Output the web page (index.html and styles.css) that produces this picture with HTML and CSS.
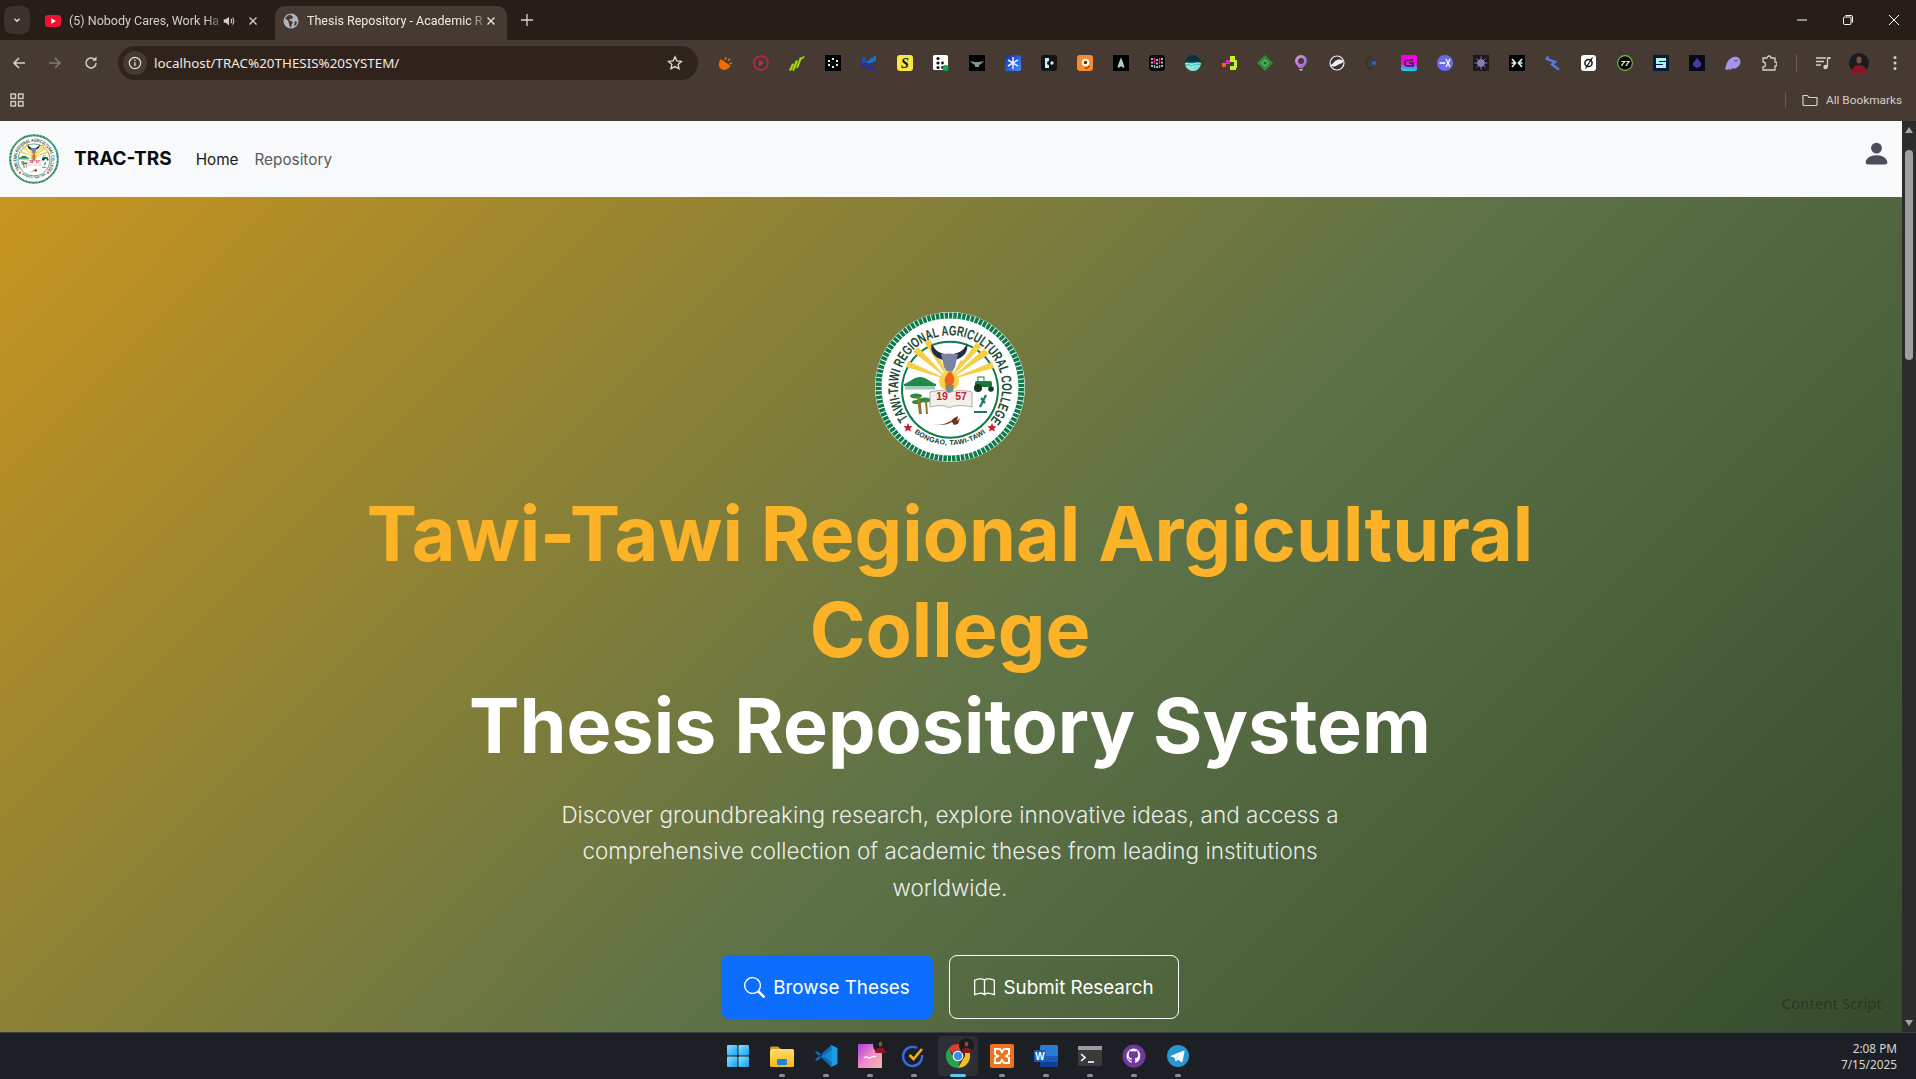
FILE: index.html
```html
<!DOCTYPE html>
<html lang="en">
<head>
<meta charset="utf-8">
<title>Thesis Repository - Academic Research</title>
<link rel="stylesheet" href="styles.css">
</head>
<body>
<svg class="defs" aria-hidden="true">
  <defs>
    <linearGradient id="gBlue" x1="0" y1="0" x2="1" y2="1"><stop offset="0" stop-color="#0d2fb0"/><stop offset="1" stop-color="#3f8cff"/></linearGradient>
    <linearGradient id="gMag" x1="0" y1="0" x2="0" y2="1"><stop offset="0" stop-color="#f700e6"/><stop offset=".5" stop-color="#f700e6"/><stop offset="1" stop-color="#00e5ee"/></linearGradient>
    <linearGradient id="gTeal" x1="0" y1="0" x2="0" y2="1"><stop offset="0" stop-color="#082a38"/><stop offset=".45" stop-color="#0d3a46"/><stop offset=".5" stop-color="#39c5b8"/><stop offset="1" stop-color="#9cf0e4"/></linearGradient>
    <linearGradient id="gBalloon" x1="0" y1="0" x2="1" y2="1"><stop offset="0" stop-color="#e59adf"/><stop offset="1" stop-color="#8a5fd0"/></linearGradient>
    <linearGradient id="gPic" x1="0" y1="0" x2="1" y2="1"><stop offset="0" stop-color="#a93fd8"/><stop offset=".5" stop-color="#f08acb"/><stop offset="1" stop-color="#f3b9a6"/></linearGradient>
    <linearGradient id="gWin" x1="0" y1="0" x2="1" y2="1"><stop offset="0" stop-color="#7fe6ff"/><stop offset="1" stop-color="#1b9cf0"/></linearGradient>
    <linearGradient id="gFolder" x1="0" y1="0" x2="0" y2="1"><stop offset="0" stop-color="#ffdc6a"/><stop offset="1" stop-color="#f5b81f"/></linearGradient>
    <path id="arcTop" d="M33.200 106.300A52 52 0 1 1 116.800 106.300"/>
    <path id="arcBot" d="M32 114A58 58 0 0 0 118 114"/>
    <symbol id="seal" viewBox="0 0 150 150">
      <circle cx="75" cy="75" r="75" fill="#fff"/>
      <circle cx="75" cy="75" r="71.500" fill="#fff" stroke="#0f7a4b" stroke-width="6"/>
      <circle cx="75" cy="75" r="71.500" fill="none" stroke="#fff" stroke-width="6" stroke-dasharray="1 3.400"/>
      <path d="M31.500 98A48 48 0 1 1 118.500 98A48 48 0 0 1 31.500 98z" fill="#fff" stroke="#0f7a4b" stroke-width="2"/>
      <text class="seal-top"><textPath href="#arcTop" startOffset="0" textLength="232" lengthAdjust="spacingAndGlyphs">TAWI-TAWI REGIONAL AGRICULTURAL COLLEGE</textPath></text>
      <text class="seal-bot"><textPath href="#arcBot" startOffset="50%" text-anchor="middle">BONGAO, TAWI-TAWI</textPath></text>
      <path d="M33 111l1.300 3 3.300.3-2.500 2.100.8 3.200-2.900-1.700-2.900 1.700.8-3.200-2.500-2.100 3.300-.3z M117 111l1.300 3 3.300.3-2.500 2.100.8 3.200-2.900-1.700-2.900 1.700.8-3.200-2.500-2.100 3.300-.3z" fill="#c8202e"/>
      <path fill="#f5cf45" d="M74 68L31 55l2-6z M74 68L38 40l5-5z M74 68L49 30l6-3z M74 68L62 50l4-2z M74 68L86 48l4 2z M74 68L101 31l6 3z M74 68L109 37l5 5z M74 68L117 50l2 6z"/>
      <path d="M57 31c-3 9 3 15 11 17l6 2 6-2c8-2 14-8 12-17-2 7-8 10-14 11-3-.5-6-.5-8 0-6-1-11-4-13-11z" fill="#1f2f45"/>
      <path d="M66 42h17l-3 13-4 7h-3l-4-7z" fill="#7a83a0"/>
      <circle cx="74" cy="69" r="10" fill="#f7d24a"/>
      <path d="M75 59c4 4 6 9 2 14h-6c-3-5-1-9 4-14z" fill="#e8641e"/>
      <path d="M70 73h9l-3 17h-3z" fill="#7c8a86"/>
      <path d="M29 72c6-2 10-7 16-7s10 5 16 7v2H29z" fill="#1f8a4c"/>
      <path d="M30 74h30v3.500H30z" fill="#9ccdb6"/>
      <g fill="#2f8a3a"><ellipse cx="41" cy="84" rx="6" ry="2.400"/><ellipse cx="50" cy="88" rx="6" ry="2.400"/><ellipse cx="42" cy="90" rx="5" ry="2"/></g>
      <path d="M42 85l2 17h3l-2-17z M50 89l1 13h2l-1-13z" fill="#8a7a30"/>
      <path d="M55 80c8-2 15-2 19 1 4-3 14-3 23-1v15c-9-2-19-2-23 1-4-3-11-3-19-1z" fill="#f3f0ea" stroke="#8d8d8d" stroke-width=".7"/>
      <text class="seal-yr" x="67" y="88" text-anchor="middle">19</text>
      <text class="seal-yr" x="86" y="88" text-anchor="middle">57</text>
      <g fill="#1a7a3c"><rect x="100" y="69" width="17" height="6" rx="2"/><circle cx="103" cy="76" r="4" fill="#103a22"/><circle cx="116" cy="77" r="2.800" fill="#103a22"/><rect x="103" y="65" width="6" height="5" fill="none" stroke="#1a7a3c"/></g>
      <path d="M111 83l-6 12m1-9l4 5m-11 9h13" stroke="#1a7a5a" stroke-width="2.200" fill="none"/>
      <path d="M58 112c7 2 12 0 18-3l3-3 4-2-1 5 3-3-2 6-4 1-2-3c-5 3-12 4-19 2z" fill="#6d3418"/>
    </symbol>
  </defs>
</svg>

<div class="window">
  <header class="tabstrip">
    <button class="tab-search" aria-label="Search tabs"><svg viewBox="0 0 12 12" class="i10"><path d="M3 4.500L6 7.500 9 4.500" fill="none" stroke="#e8e0da" stroke-width="1.600"/></svg></button>
    <div class="tab">
      <svg viewBox="0 0 16 12" class="fav-yt"><rect width="16" height="12" rx="3" fill="#f01030"/><path d="M6.300 3.200L11 6 6.300 8.800z" fill="#fff"/></svg>
      <span class="tab-title">(5) Nobody Cares, Work Ha</span>
      <svg viewBox="0 0 16 16" class="i14 tab-sound"><path d="M2 6v4h2.500L8 13V3L4.500 6z" fill="#d6cdc7"/><path d="M10 5.500c1.200 1.300 1.200 3.700 0 5M12 4c2 2.200 2 5.800 0 8" fill="none" stroke="#d6cdc7" stroke-width="1.200"/></svg>
      <svg viewBox="0 0 10 10" class="i10 tab-x"><path d="M1.500 1.500l7 7m0-7l-7 7" stroke="#d6cdc7" stroke-width="1.300"/></svg>
    </div>
    <div class="tab tab-active">
      <svg viewBox="0 0 16 16" class="i16"><circle cx="8" cy="8" r="7.500" fill="#aeb4bb"/><path d="M6 1.500c-1 2-3 2-4 4l3 2 1 3 1 4c2 0 1-3 3-5-1-2-3-1-4-3 1-1 3 0 4-2 0-1-1-2-4-3zM12 8l2 1-1 3-2 1z" fill="#463a33"/></svg>
      <span class="tab-title">Thesis Repository - Academic R</span>
      <svg viewBox="0 0 10 10" class="i10 tab-x"><path d="M1.500 1.500l7 7m0-7l-7 7" stroke="#efe9e5" stroke-width="1.300"/></svg>
    </div>
    <svg viewBox="0 0 12 12" class="i12 tab-new"><path d="M6 0v12M0 6h12" stroke="#ddd5cf" stroke-width="1.300"/></svg>
    <div class="winctl">
      <svg viewBox="0 0 12 12" class="i12"><path d="M1 6h10" stroke="#fff" stroke-width="1"/></svg>
      <svg viewBox="0 0 12 12" class="i12"><rect x="1.500" y="3" width="7.500" height="7.500" rx="1.200" fill="none" stroke="#fff"/><path d="M3.500 1.500h5.500a1.500 1.500 0 0 1 1.500 1.500v5.500" fill="none" stroke="#fff"/></svg>
      <svg viewBox="0 0 12 12" class="i12"><path d="M1 1l10 10M11 1L1 11" stroke="#fff" stroke-width="1"/></svg>
    </div>
  </header>

  <div class="toolbar">
    <div class="navbtns">
      <svg viewBox="0 0 16 16" class="i16"><path d="M14 8H3M8 3L3 8l5 5" fill="none" stroke="#d9d0ca" stroke-width="1.600"/></svg>
      <svg viewBox="0 0 16 16" class="i16"><path d="M2 8h11M8 3l5 5-5 5" fill="none" stroke="#85796f" stroke-width="1.600"/></svg>
      <svg viewBox="0 0 16 16" class="i16"><path d="M13 8a5 5 0 1 1-1.500-3.600" fill="none" stroke="#d9d0ca" stroke-width="1.500"/><path d="M13.500 1.500v4.200H9.300z" fill="#d9d0ca"/></svg>
    </div>
    <div class="omnibox">
      <span class="site-info"><svg viewBox="0 0 16 16" class="i14"><circle cx="8" cy="8" r="6.500" fill="none" stroke="#e8e0da" stroke-width="1.300"/><path d="M8 7v4.500M8 4.300v1.400" stroke="#e8e0da" stroke-width="1.400"/></svg></span>
      <span class="url">localhost/TRAC%20THESIS%20SYSTEM/</span>
      <svg viewBox="0 0 16 16" class="i16 star"><path d="M8 1.800l1.900 4.100 4.500.5-3.300 3 .9 4.400L8 11.600l-4 2.200.9-4.400-3.300-3 4.500-.5z" fill="none" stroke="#e8e0da" stroke-width="1.300"/></svg>
    </div>
    <div class="exts">
      <span class="ext"><svg viewBox="0 0 16 16"><g transform="rotate(35 7 10)"><path d="M1 7h12c0 5-3 8-6 8s-6-3-6-8z" fill="#f66a00"/></g><path d="M8 5l1-3M11 6l2-2.500M12.500 9l2.500-1" stroke="#f66a00" stroke-width="1.500"/></svg></span>
      <span class="ext"><svg viewBox="0 0 16 16"><circle cx="8" cy="8" r="7" fill="none" stroke="#c4244f" stroke-width="1.500"/><path d="M6 4.500L11.500 8 6 11.500z" fill="#c4244f"/></svg></span>
      <span class="ext"><svg viewBox="0 0 16 16"><path d="M0 15.500l3-7 2 .5-3 7zM3 15l4-10 2 1-4 10zM7 13l4-11 2 1-4 10zM11 4l3.500-3 1.500 1-4 3z" fill="#a2d80f"/></svg></span>
      <span class="ext"><svg viewBox="0 0 16 16"><rect width="16" height="16" fill="#000"/><g fill="#e8e8e8"><rect x="7" y="3" width="2" height="2"/><rect x="3" y="5" width="2" height="2"/><rect x="11" y="5" width="2" height="2"/><rect x="3" y="9" width="2" height="2"/><rect x="11" y="9" width="2" height="2"/><rect x="7" y="11" width="2" height="2"/></g></svg></span>
      <span class="ext"><svg viewBox="0 0 16 16"><path d="M1 2h4v6H1z" fill="#1750b5"/><path d="M5 7l10-7v6L8 8.500z" fill="#0d74d8"/><path d="M5 8.500l9 3V16L1 12V8.500z" fill="#2b2f8a"/></svg></span>
      <span class="ext"><svg viewBox="0 0 16 16"><rect width="16" height="16" rx="3" fill="#fde543"/><text class="ext-s" x="8" y="13" text-anchor="middle">S</text></svg></span>
      <span class="ext"><svg viewBox="0 0 16 16"><rect width="15" height="15" rx="1.500" fill="#fff"/><g fill="#111"><circle cx="5" cy="3.500" r="1.600"/><circle cx="5" cy="8" r="1.600"/><circle cx="9.500" cy="8" r="1.400"/><circle cx="5" cy="12.500" r="1.600"/><circle cx="9.500" cy="12.500" r="1.400"/></g><circle cx="12.500" cy="13" r="3" fill="#14a84f"/></svg></span>
      <span class="ext"><svg viewBox="0 0 16 16"><rect width="16" height="16" fill="#000"/><path d="M1 6l5 1h4l5-1-3 3-2 1v2H6v-2L4 9z" fill="#8f8f8f"/></svg></span>
      <span class="ext"><svg viewBox="0 0 16 16"><rect width="16" height="16" rx="2" fill="url(#gBlue)"/><path d="M8 2v12M3 5l10 6M13 5L3 11" stroke="#e6f0ff" stroke-width="1.500"/></svg></span>
      <span class="ext"><svg viewBox="0 0 16 16"><rect width="16" height="16" rx="3" fill="#101416"/><path d="M4 3h4v3a2 2 0 0 0 0 4v3H4z" fill="#cfeafc"/><circle cx="11" cy="8" r="1.700" fill="#cfeafc"/></svg></span>
      <span class="ext"><svg viewBox="0 0 16 16"><rect width="16" height="16" rx="3" fill="#f98a2f"/><circle cx="8.500" cy="7.500" r="3.800" fill="#fff"/><circle cx="8.500" cy="7.500" r="1.700" fill="#5a2a00"/><path d="M8 13c2 .5 3.500 0 4-2" fill="none" stroke="#5a2a00"/></svg></span>
      <span class="ext"><svg viewBox="0 0 16 16"><rect width="16" height="16" fill="#000"/><path d="M8 2.500l2 5 1.500 5H9.500L8 11l-1.500 1.500H4.500L6 7.500z" fill="#c8c8c8"/></svg></span>
      <span class="ext"><svg viewBox="0 0 16 16"><rect width="16" height="16" rx="3" fill="#0a0a0a"/><path d="M3 3v10M8 4v9M13 3v10" stroke="#e8e8e8" stroke-width="1.500" stroke-dasharray="2 1.500"/><path d="M5.500 3v6M10.500 3v6" stroke="#ee1f9a" stroke-width="1.500"/><path d="M5.500 10v3M10.500 10v3" stroke="#2fd8d0" stroke-width="1.500"/></svg></span>
      <span class="ext"><svg viewBox="0 0 16 16"><circle cx="8" cy="8" r="8" fill="url(#gTeal)"/><path d="M0 9c3-2 5 1 8 0s5-2 8 0M1 12c3-1 5 1 7 0s5-2 7 0" fill="none" stroke="#d9fbf5" stroke-width=".8"/></svg></span>
      <span class="ext"><svg viewBox="0 0 16 16"><rect x="9" y="1" width="5" height="6" fill="#c9ee2c"/><rect x="9" y="11" width="6" height="4" fill="#c9ee2c"/><rect x="13" y="5" width="3" height="8" fill="#c9ee2c"/><rect x="5" y="5" width="4" height="4" fill="#f01cd0"/><rect x="1" y="8" width="4" height="4" fill="#f0602a"/></svg></span>
      <span class="ext"><svg viewBox="0 0 16 16"><path d="M8 0l8 8-8 8-8-8z" fill="#2f8a3c"/><path d="M8 4l4 4-4 4-4-4z" fill="#5db85c"/><circle cx="8" cy="8" r="1.600" fill="#1c5a26"/></svg></span>
      <span class="ext"><svg viewBox="0 0 16 16"><path d="M8 0a6 6 0 0 1 6 6c0 3-3 5-4 7H6c-1-2-4-4-4-7a6 6 0 0 1 6-6z" fill="url(#gBalloon)"/><circle cx="8" cy="6" r="3" fill="#463a33"/><path d="M6 14h4v1H6zM7 15.300h2V16H7z" fill="#b9aab5"/></svg></span>
      <span class="ext"><svg viewBox="0 0 16 16"><circle cx="8" cy="8" r="7" fill="#3d322c" stroke="#f2f2f2" stroke-width="1.200"/><path d="M1.500 10c3-1 3.500-4 6.500-5s5 0 6.500 1c-1 3-3 2-6 4s-5 2-7 0z" fill="#f2f2f2"/></svg></span>
      <span class="ext"><svg viewBox="0 0 16 16"><path d="M8 1.500a6.500 6.500 0 0 0-2 12.700" fill="none" stroke="#333" stroke-width="2"/><circle cx="9" cy="8" r="2" fill="#1c6cf0"/></svg></span>
      <span class="ext"><svg viewBox="0 0 16 16"><rect width="16" height="16" rx="2" fill="url(#gMag)"/><path d="M12 5H5.500L4 6.500v3L5.500 11H12V8H8" fill="none" stroke="#2a2a35" stroke-width="1.600"/></svg></span>
      <span class="ext"><svg viewBox="0 0 16 16"><circle cx="8" cy="8" r="8" fill="#6a6cf0"/><path d="M2.500 8h6M9 4l4 8M13 4l-4 8" stroke="#fff" stroke-width="1.300" fill="none"/></svg></span>
      <span class="ext"><svg viewBox="0 0 16 16"><rect width="16" height="16" fill="#191a22"/><circle cx="8" cy="8" r="3.800" fill="#8a7fae"/><path d="M8 1.500v13M1.500 8h13M3.500 3.500l9 9M12.500 3.500l-9 9" stroke="#8a7fae"/></svg></span>
      <span class="ext"><svg viewBox="0 0 16 16"><rect width="16" height="16" fill="#000"/><path d="M3 4l3.500 4L3 12M13 4L9.500 8 13 12M2.500 8h4M9.500 8h4" fill="none" stroke="#eee" stroke-width="1.600"/></svg></span>
      <span class="ext"><svg viewBox="0 0 16 16"><path d="M3 1.500L2 4l8 3-3 2.500 7 5" fill="none" stroke="#4d7df0" stroke-width="2.400"/></svg></span>
      <span class="ext"><svg viewBox="0 0 16 16"><rect width="15" height="16" rx="3" fill="#fff"/><circle cx="7.500" cy="8" r="3.600" fill="none" stroke="#111" stroke-width="1.500"/><path d="M11.500 2.500l-7 11" stroke="#111" stroke-width="1.300"/></svg></span>
      <span class="ext"><svg viewBox="0 0 16 16"><circle cx="8" cy="8" r="7.400" fill="#060606" stroke="#76c442" stroke-width="1.100"/><text class="ext-77" x="8" y="11" text-anchor="middle">77</text></svg></span>
      <span class="ext"><svg viewBox="0 0 16 16"><rect width="16" height="16" fill="#0a1a3c"/><path d="M3 3h10v3H6v1h7v6H3v-3h7V9H3z" fill="#a8f3ee"/></svg></span>
      <span class="ext"><svg viewBox="0 0 16 16"><rect width="16" height="16" fill="#0a0a14"/><path d="M8 3l4 5v3l-4 2-4-2V8z" fill="#5035a8"/></svg></span>
      <span class="ext"><svg viewBox="0 0 16 16"><path d="M0 14c1-2 1-5 3-8s6-5 9-4 4 4 3 7-4 4-6 5l-1-1-3 2-1-1-2 1z" fill="#a693ea"/><path d="M10 5v1.500M12 5v1.500" stroke="#463a33"/></svg></span>
      <span class="ext"><svg viewBox="0 0 16 16"><path d="M2 3h4a2 2 0 0 1 4 0h4v4a2 2 0 0 1 0 4v4H2v-3a2 2 0 0 0 0-5z" fill="none" stroke="#d8cfc8" stroke-width="1.300"/></svg></span>
    </div>
    <span class="tool-sep"></span>
    <span class="tool-btn"><svg viewBox="0 0 16 16" class="i16"><path d="M1 3h10M1 6.500h8M1 10h5" stroke="#d8cfc8" stroke-width="1.500"/><path d="M12.500 3v9" stroke="#d8cfc8" stroke-width="1.300"/><path d="M12.500 2h3v2h-3z" fill="#d8cfc8"/><circle cx="10.500" cy="12" r="2.200" fill="#d8cfc8"/></svg></span>
    <span class="tool-btn"><svg viewBox="0 0 20 20" class="avatar"><circle cx="10" cy="10" r="10" fill="#1b1b1f"/><path d="M2 20c1-6 4-8 8-8s7 2 8 8z" fill="#8a1524"/><ellipse cx="10" cy="7" rx="2.600" ry="3.600" fill="#7a5240"/></svg></span>
    <span class="tool-btn"><svg viewBox="0 0 4 16" class="dots"><g fill="#d8cfc8"><circle cx="2" cy="2.500" r="1.500"/><circle cx="2" cy="8" r="1.500"/><circle cx="2" cy="13.500" r="1.500"/></g></svg></span>
  </div>

  <div class="bookmarks">
    <svg viewBox="0 0 14 14" class="i14 apps"><g fill="none" stroke="#d8cfc8" stroke-width="1.400"><rect x="1" y="1" width="4.500" height="4.500"/><rect x="8.500" y="1" width="4.500" height="4.500"/><rect x="1" y="8.500" width="4.500" height="4.500"/><rect x="8.500" y="8.500" width="4.500" height="4.500"/></g></svg>
    <span class="bm-sep"></span>
    <svg viewBox="0 0 16 14" class="i16 bm-folder"><path d="M1 11.500V2.500h4.500l1.500 2h8v7a1 1 0 0 1-1 1H2a1 1 0 0 1-1-1z" fill="none" stroke="#d8cfc8" stroke-width="1.200"/></svg>
    <span class="bm-text">All Bookmarks</span>
  </div>

  <div class="viewport">
    <div class="page">
      <nav class="navbar">
        <svg class="brand-logo" role="img" aria-label="TRAC seal"><use href="#seal"/></svg>
        <span class="brand-name">TRAC-TRS</span>
        <a class="nav-link nav-current">Home</a>
        <a class="nav-link">Repository</a>
        <svg viewBox="0 0 16 16" class="nav-user"><path d="M3 14s-1 0-1-1 1-4 6-4 6 3 6 4-1 1-1 1H3zm5-6a3 3 0 1 0 0-6 3 3 0 0 0 0 6z" fill="#495057"/></svg>
      </nav>
      <section class="hero">
        <svg class="hero-logo" role="img" aria-label="Tawi-Tawi Regional Agricultural College seal"><use href="#seal"/></svg>
        <h1 class="hero-title"><span class="gold">Tawi-Tawi Regional Argicultural College</span><span class="white">Thesis Repository System</span></h1>
        <p class="hero-lead">Discover groundbreaking research, explore innovative ideas, and access a comprehensive collection of academic theses from leading institutions worldwide.</p>
        <div class="hero-actions">
          <a class="btn btn-primary"><svg viewBox="0 0 16 16" class="btn-ic"><path d="M11.742 10.344a6.500 6.500 0 1 0-1.397 1.398h-.001c.03.04.062.078.098.115l3.850 3.850a1 1 0 0 0 1.415-1.414l-3.850-3.850a1.007 1.007 0 0 0-.115-.1zM12 6.500a5.500 5.500 0 1 1-11 0 5.500 5.500 0 0 1 11 0z" fill="#fff"/></svg>Browse Theses</a>
          <a class="btn btn-outline"><svg viewBox="0 0 16 16" class="btn-ic"><path d="M1 2.828c.885-.37 2.154-.769 3.388-.893 1.330-.134 2.458.063 3.112.752v9.746c-.935-.53-2.120-.603-3.213-.493-1.180.12-2.370.461-3.287.811V2.828zm7.500-.141c.654-.689 1.782-.886 3.112-.752 1.234.124 2.503.523 3.388.893v9.923c-.918-.35-2.107-.692-3.287-.81-1.094-.111-2.278-.039-3.213.492V2.687zM8 1.783C7.015.936 5.587.81 4.287.94c-1.514.153-3.042.672-3.994 1.105A.5.5 0 0 0 0 2.500v11a.5.5 0 0 0 .707.455c.882-.4 2.303-.881 3.680-1.020 1.409-.142 2.590.087 3.223.877a.5.5 0 0 0 .78 0c.633-.79 1.814-1.019 3.222-.877 1.378.139 2.800.62 3.681 1.020A.5.5 0 0 0 16 13.500v-11a.5.5 0 0 0-.293-.455c-.952-.433-2.480-.952-3.994-1.105C10.413.809 8.985.936 8 1.783z" fill="#fff"/></svg>Submit Research</a>
        </div>
      </section>
      <span class="content-script">Content Script</span>
    </div>
    <div class="scrollbar">
      <svg viewBox="0 0 10 8" class="sb-arrow"><path d="M5 1l4 6H1z" fill="#a3a3a3"/></svg>
      <div class="sb-track"><div class="sb-thumb"></div></div>
      <svg viewBox="0 0 10 8" class="sb-arrow"><path d="M1 1h8L5 7z" fill="#a3a3a3"/></svg>
    </div>
  </div>

  <footer class="taskbar">
    <div class="tb-icons">
      <span class="tb-item tb-plain"><svg viewBox="0 0 24 24"><g fill="url(#gWin)"><rect x="1" y="1" width="10.500" height="10.500" rx="1"/><rect x="12.500" y="1" width="10.500" height="10.500" rx="1"/><rect x="1" y="12.500" width="10.500" height="10.500" rx="1"/><rect x="12.500" y="12.500" width="10.500" height="10.500" rx="1"/></g></svg></span>
      <span class="tb-item"><svg viewBox="0 0 24 24"><path d="M0 4a1.500 1.500 0 0 1 1.500-1.500H8L11 5h-11z" fill="#d99a1a"/><rect y="5" width="24" height="18" rx="1.500" fill="url(#gFolder)"/><rect x="7" y="15" width="10" height="6" rx="1" fill="#1e84d6"/></svg></span>
      <span class="tb-item"><svg viewBox="0 0 24 24"><path d="M17.500 1L23.500 4v16l-6 3L7 12.500z" fill="#1c9ae6"/><path d="M17.500 1v22L8 13.500l9.500-12.500z" fill="#0c7cc8" opacity=".5"/><path d="M1 8.500l2-1.500 14.500 11v5L9 15l-8-6.500z M1 15.500l2 1.500 14.500-11V1L1 15.500z" fill="#0a6cb8"/></svg></span>
      <span class="tb-item"><svg viewBox="0 0 24 24"><rect width="24" height="24" fill="url(#gPic)"/><path d="M6 14c3-3 4 1 6 0s3-3 6-1" fill="none" stroke="#fff" stroke-width="1.200"/></svg><svg viewBox="0 0 20 20" class="tb-badge"><circle cx="10" cy="10" r="10" fill="#1b1b1f"/><path d="M3 20c0-5 3-7 7-7s7 2 7 7z" fill="#8a1524"/><ellipse cx="10" cy="8" rx="2.500" ry="3.500" fill="#7a5240"/></svg></span>
      <span class="tb-item"><svg viewBox="0 0 24 24"><path d="M20 11a9.500 9.500 0 1 1-5-7" fill="none" stroke="#3a6ae0" stroke-width="2.400"/><path d="M7.500 11l4 4L20 5" fill="none" stroke="#f5ac1a" stroke-width="2.600"/></svg></span>
      <span class="tb-item tb-active"><svg viewBox="0 0 24 24"><path d="M12 0a12 12 0 0 1 10.400 6H12a6 6 0 0 0-5.500 3.500L2.800 4.200A12 12 0 0 1 12 0z" fill="#e33b2e"/><path d="M22.400 6A12 12 0 0 1 12 24l5.200-9a6 6 0 0 0-.2-9z" fill="#f6c01c"/><path d="M12 24A12 12 0 0 1 2.800 4.200L7.800 15a6 6 0 0 0 6 3z" fill="#2aa24a"/><circle cx="12" cy="12" r="5.400" fill="#fff"/><circle cx="12" cy="12" r="4.200" fill="#3f88ee"/></svg><svg viewBox="0 0 20 20" class="tb-badge"><circle cx="10" cy="10" r="10" fill="#1b1b1f"/><path d="M3 20c0-5 3-7 7-7s7 2 7 7z" fill="#8a1524"/><ellipse cx="10" cy="8" rx="2.500" ry="3.500" fill="#7a5240"/></svg></span>
      <span class="tb-item"><svg viewBox="0 0 24 24"><rect width="24" height="24" rx="2" fill="#f0741e"/><path d="M5 5h5l2 3 2-3h5v5l-3 2 3 2v5h-5l-2-3-2 3H5v-5l3-2-3-2z" fill="none" stroke="#fff" stroke-width="2"/></svg></span>
      <span class="tb-item"><svg viewBox="0 0 24 24"><rect x="6" y="1" width="18" height="22" rx="1.500" fill="#2b7cd3"/><rect x="6" y="12" width="18" height="6" fill="#185abd"/><rect x="6" y="18" width="18" height="5" fill="#103f91"/><rect x="0" y="6" width="12" height="12" rx="1.500" fill="#1a5cc0"/><text class="tb-w" x="6" y="15.500" text-anchor="middle">W</text></svg></span>
      <span class="tb-item"><svg viewBox="0 0 24 24"><rect y="2" width="24" height="20" rx="1.500" fill="#3a3a3a"/><rect y="2" width="24" height="4" fill="#9c9c9c"/><path d="M3 10l4 3.500L3 17" fill="none" stroke="#fff" stroke-width="1.600"/><path d="M10 18h6" stroke="#fff" stroke-width="1.600"/></svg></span>
      <span class="tb-item"><svg viewBox="0 0 24 24"><circle cx="12" cy="12" r="11.500" fill="#6e3a9c"/><path d="M12 4.500a7.500 7.500 0 0 0-2.400 14.600v-2.300c-2.200.5-2.700-1-2.700-1-.4-.9-.9-1.200-.9-1.200-.7-.5.100-.5.100-.5.800.1 1.200.8 1.200.8.700 1.200 1.900.9 2.300.7.100-.5.300-.9.500-1.100-1.700-.2-3.500-.9-3.500-3.700 0-.8.300-1.500.8-2-.1-.2-.3-1 .1-2 0 0 .6-.2 2 .8a7 7 0 0 1 3.800 0c1.400-1 2-.8 2-.8.400 1 .1 1.800.1 2 .5.500.8 1.200.8 2 0 2.900-1.800 3.500-3.500 3.700.3.200.5.700.5 1.400v3.100A7.500 7.500 0 0 0 12 4.500z" fill="#fff"/></svg></span>
      <span class="tb-item"><svg viewBox="0 0 24 24"><circle cx="12" cy="12" r="11" fill="#2797d3"/><path d="M5 11.800l12.500-5c.7-.2 1.200.2 1 1l-2 9.700c-.2.800-.7 1-1.300.6l-3.300-2.500-1.700 1.600c-.3.300-.5.300-.7-.1l-1-3.600L5 12.500c-.7-.2-.7-.5 0-.7z" fill="#fff"/><path d="M9 14l6-5-4.500 6z" fill="#bcd9ea"/></svg></span>
    </div>
    <div class="clock"><span>2:08 PM</span><span>7/15/2025</span></div>
  </footer>
</div>
</body>
</html>
```

FILE: styles.css
```css
* { box-sizing: border-box; }
html, body { margin: 0; height: 100%; overflow: hidden; }
body { font-family: "Noto Sans", "Open Sans", sans-serif; background: #1c1f24; }
svg { display: block; flex: none; }
.defs { width: 0; height: 0; }
.i10 { width: 10px; height: 10px; }
.i12 { width: 12px; height: 12px; }
.i14 { width: 14px; height: 14px; }
.i16 { width: 16px; height: 16px; }

.window { height: 100vh; display: flex; flex-direction: column; }

/* browser chrome */
.tabstrip { height: 40px; background: #281e19; display: flex; align-items: flex-end; padding-left: 4px; flex: none; }
.tab-search { width: 26px; height: 28px; margin-bottom: 6px; border: 0; padding: 0; border-radius: 8px; background: #3d322c; display: flex; align-items: center; justify-content: center; }
.tab { width: 237px; height: 34px; padding: 0 0 5px 7px; margin-left: 8px; display: flex; align-items: center; border-radius: 10px 10px 0 0; }
.fav-yt { width: 16px; height: 12px; margin-right: 8px; }
.tab-title { flex: 1; min-width: 0; font-family: "Roboto", sans-serif; font-size: 12.500px; color: #d6cdc7; white-space: nowrap; -webkit-mask-image: linear-gradient(90deg, #000 90%, rgba(0,0,0,.15)); mask-image: linear-gradient(90deg, #000 90%, rgba(0,0,0,.15)); }
.tab-sound { margin-right: 12px; }
.tab-x { margin-right: 17px; }
.tab-active { background: #463a33; width: 232px; padding-left: 8px; margin-left: 0; }
.tab-active .tab-title { color: #f0eae6; margin-left: 8px; }
.tab-active .tab-x { margin-right: 11px; }
.tab-new { margin: 0 0 14px 14px; }
.winctl { margin-left: auto; display: flex; gap: 34px; padding-right: 16px; margin-bottom: 14px; }

.toolbar { height: 45px; background: #463a33; display: flex; align-items: center; flex: none; }
.navbtns { width: 118px; padding-left: 11px; display: flex; gap: 20px; }
.omnibox { width: 580px; height: 34px; background: #30231c; border-radius: 17px; display: flex; align-items: center; padding: 0 12px 0 5px; }
.site-info { width: 24px; height: 24px; border-radius: 12px; background: #463a33; display: flex; align-items: center; justify-content: center; margin-right: 7px; }
.url { flex: 1; font-size: 13.400px; color: #efe9e5; white-space: nowrap; }
.star { margin-right: 3px; }
.exts { display: flex; padding-left: 9px; }
.ext { width: 36px; height: 16px; display: flex; justify-content: center; }
.ext svg { width: 16px; height: 16px; }
.ext-s { font: italic 700 14px "Liberation Serif", serif; fill: #111; }
.ext-77 { font: italic 700 8px "Liberation Sans", sans-serif; fill: #fff; }
.tool-sep { width: 1px; height: 18px; background: #6a5d55; margin-left: 9px; }
.tool-btn { width: 36px; display: flex; justify-content: center; }
.tool-sep + .tool-btn { margin-left: 8px; }
.avatar { width: 20px; height: 20px; }
.dots { width: 4px; height: 16px; }

.bookmarks { height: 36px; background: #463a33; display: flex; align-items: center; padding: 0 14px 6px 10px; flex: none; }
.bm-sep { width: 1px; height: 16px; background: #6a5d55; margin-left: auto; }
.bm-folder { margin: 0 8px 0 16px; }
.bm-text { font-family: "Roboto", sans-serif; font-size: 11.800px; color: #d6cdc7; white-space: nowrap; }

/* viewport */
.viewport { flex: 1; min-height: 0; display: flex; }
.page { flex: 1; min-width: 0; overflow: hidden; position: relative; font-family: "Inter", sans-serif; }
.navbar { height: 76px; background: #f8f9fa; display: flex; align-items: center; padding: 0 11px 0 9px; }
.brand-logo { width: 50px; height: 50px; margin-right: 15px; }
.brand-name { font-size: 19px; font-weight: 700; color: #0b0b0b; margin-right: 24px; margin-bottom: 2px; }
.nav-link { font-size: 15.300px; color: #565b60; margin-right: 16px; }
.nav-current { color: #16191c; }
.nav-user { width: 29px; height: 29px; margin-left: auto; margin-bottom: 11px; }

.hero { height: 1100px; padding: 115px 2px 0 0; display: flex; flex-direction: column; align-items: center; text-align: center; background: linear-gradient(135deg, #c8951f 0%, #5d7247 50%, #2c4427 100%); }
.hero-logo { width: 150px; height: 150px; margin-bottom: 24px; }
.hero-title { margin: 0 0 23px; width: 1240px; font-family: "Inter", sans-serif; font-size: 75.500px; line-height: 96px; font-weight: 700; }
.hero-title span { display: block; }
.gold { color: #fdb327; }
.white { color: #fff; }
.hero-lead { margin: 0 0 49px; width: 800px; font-size: 22.500px; line-height: 36.400px; font-weight: 300; color: rgba(255,255,255,.9); }
.hero-actions { display: flex; gap: 16px; }
.btn { height: 64px; border-radius: 8px; display: flex; align-items: center; justify-content: center; gap: 8px; font-size: 18.800px; color: #fff; }
.btn-ic { width: 21px; height: 21px; }
.btn-primary { width: 212px; background: #0d6efd; }
.btn-outline { width: 230px; border: 1px solid #fff; }
.content-script { position: absolute; right: 20px; bottom: 19px; font: 15px "Noto Sans", sans-serif; color: rgba(30,30,30,.55); }

.scrollbar { width: 14px; flex: none; background: #2c2c2c; display: flex; flex-direction: column; align-items: center; padding: 5px 0; }
.sb-arrow { width: 10px; height: 8px; }
.sb-track { flex: 1; width: 100%; padding-top: 16px; }
.sb-thumb { width: 8px; height: 210px; margin: 0 auto; border-radius: 4px; background: #9f9f9f; }

/* taskbar */
.taskbar { height: 47px; flex: none; background: #1c1f24; border-top: 1px solid #3a3d42; display: flex; align-items: center; justify-content: center; position: relative; }
.tb-icons { display: flex; margin-left: -1px; }
.tb-item { width: 44px; height: 40px; display: flex; align-items: center; justify-content: center; position: relative; border-radius: 4px; }
.tb-item > svg:first-child { width: 24px; height: 24px; }
.tb-item::after { content: ""; position: absolute; left: 19px; bottom: -1px; width: 6px; height: 3px; border-radius: 2px; background: #8b8e93; }
.tb-plain::after { display: none; }
.tb-active { background: #2c2f35; width: 40px; margin: 0 2px; }
.tb-active::after { left: 12px; width: 16px; background: #5fc6f5; }
.tb-badge { position: absolute; top: 2px; right: 4px; width: 15px; height: 15px; }
.tb-w { font: 700 10px "Liberation Sans", sans-serif; fill: #fff; }
.clock { position: absolute; right: 19px; top: 7px; display: flex; flex-direction: column; align-items: flex-end; font-size: 11.800px; line-height: 16px; color: #d8d8d8; }

/* seal */
.seal-top { font: 700 14px "Liberation Sans", sans-serif; fill: #1b4a34; }
.seal-bot { font: 700 7px "Liberation Sans", sans-serif; fill: #1a3a2a; letter-spacing: .3px; }
.seal-yr { font: 700 10.500px "Liberation Sans", sans-serif; fill: #c8202e; }
```
